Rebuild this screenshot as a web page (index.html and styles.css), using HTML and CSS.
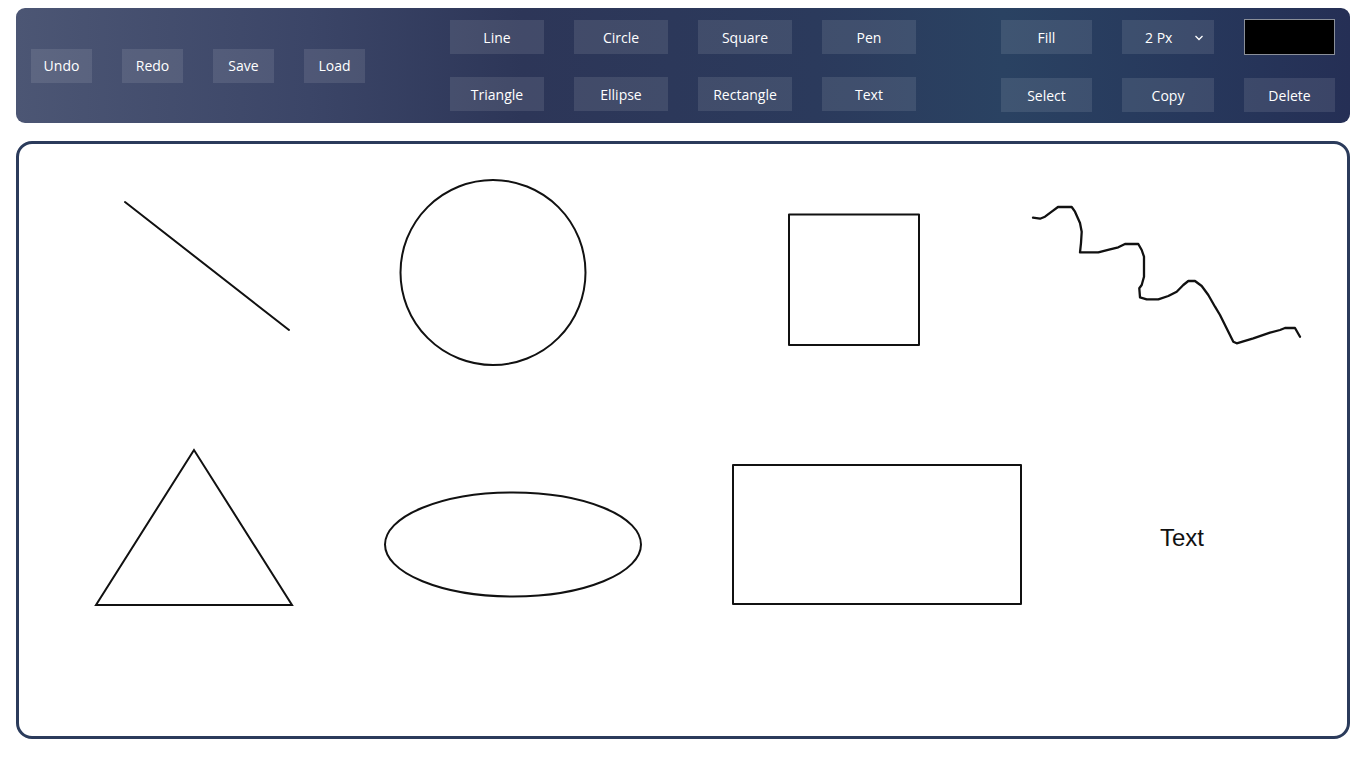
FILE: index.html
```html
<!DOCTYPE html>
<html>
<head>
<meta charset="utf-8">
<link rel="stylesheet" href="styles.css">
</head>
<body>
<div class="toolbar">
  <div class="group history">
    <button class="btn small">Undo</button>
    <button class="btn small">Redo</button>
    <button class="btn small">Save</button>
    <button class="btn small">Load</button>
  </div>
  <div class="group shapes">
    <button class="btn">Line</button>
    <button class="btn">Circle</button>
    <button class="btn">Square</button>
    <button class="btn">Pen</button>
    <button class="btn">Triangle</button>
    <button class="btn">Ellipse</button>
    <button class="btn">Rectangle</button>
    <button class="btn">Text</button>
  </div>
  <div class="group actions">
    <button class="btn">Fill</button>
    <div class="btn select"><span>2 Px</span><svg class="chev" width="10" height="6" viewBox="0 0 10 6"><path d="M1.5 1 L5 4.5 L8.5 1" fill="none" stroke="#fff" stroke-width="1.3"/></svg></div>
    <div class="color"></div>
    <button class="btn">Select</button>
    <button class="btn">Copy</button>
    <button class="btn">Delete</button>
  </div>
</div>
<div class="board">
  <svg class="drawing" width="1328" height="592" viewBox="19 144 1328 592">
    <g fill="none" stroke="#111" stroke-width="2" stroke-linejoin="round" stroke-linecap="round">
      <line x1="125" y1="202" x2="289" y2="330"/>
      <circle cx="493" cy="272.5" r="92.5"/>
      <rect x="789" y="214.5" width="130" height="130.5"/>
      <path stroke-width="2.3" d="M1033 217.7 L1040 218.7 L1045 216.7 L1051.7 211.7 L1058 207 L1071.7 207 L1075 211.7 L1080 223 L1081.7 231.7 L1081 243 L1080 252.3 L1098.3 252.3 L1110 249.3 L1118.3 247.3 L1125 244 L1138.3 244 L1141.7 250 L1144 256.7 L1144 276.7 L1141.7 285 L1139.3 288.3 L1140 297.3 L1146.7 299.3 L1158.3 299.3 L1168.3 296 L1176.7 291.7 L1183.3 285 L1188.3 281 L1195 281 L1201.7 286 L1208.3 295 L1215 306.7 L1220 315 L1233.3 341.7 L1236.7 343.3 L1253.3 338.3 L1270 332.7 L1280 330 L1285 328 L1295 328 L1300 336.7"/>
      <polygon points="194,450 96,605 292,605" stroke-linejoin="miter"/>
      <ellipse cx="513" cy="544.5" rx="128" ry="52"/>
      <rect x="733" y="465" width="288" height="139"/>
    </g>
    <text x="1160" y="546" class="label">Text</text>
  </svg>
</div>
</body>
</html>
```

FILE: styles.css
```css
* { box-sizing: border-box; }
html, body { margin: 0; padding: 0; background: #fff; }
body {
  padding: 8px 16px;
  font-family: "Open Sans", "Noto Sans", sans-serif;
}
.toolbar {
  height: 115px;
  border-radius: 9px;
  background: linear-gradient(90deg, #4c5674 0%, #3b4567 22%, #2d3658 38%, #2b3a5c 60%, #2a4262 74%, #27385c 88%, #252f55 100%);
  display: flex;
  align-items: center;
  padding: 0 15px;
  gap: 85px;
}
.group { display: grid; }
.history {
  grid-template-columns: repeat(4, 61px);
  column-gap: 30px;
}
.shapes {
  grid-template-columns: repeat(4, 94px);
  column-gap: 30px;
  row-gap: 23px;
}
.actions {
  grid-template-columns: 91px 92px 91px;
  column-gap: 30px;
  row-gap: 23px;
  align-items: center;
}
.btn {
  height: 34px;
  border: 0;
  margin: 0;
  padding: 0;
  background: rgba(255, 255, 255, 0.1);
  color: #fff;
  font-family: "Open Sans", "Noto Sans", sans-serif;
  font-size: 14px;
  display: flex;
  align-items: center;
  justify-content: center;
}
.select {
  justify-content: flex-start;
  padding-left: 23px;
  position: relative;
}
.select .chev {
  position: absolute;
  right: 10px;
  top: 15px;
}
.color {
  height: 36px;
  background: #000;
  border: 1px solid #8a8f99;
}
.board {
  margin-top: 18px;
  height: 598px;
  border: 3px solid #2b3b5b;
  border-radius: 16px;
  overflow: hidden;
}
.drawing { display: block; }
.label {
  font-family: "Liberation Sans", Arial, sans-serif;
  font-size: 24px;
  fill: #111;
}
```
